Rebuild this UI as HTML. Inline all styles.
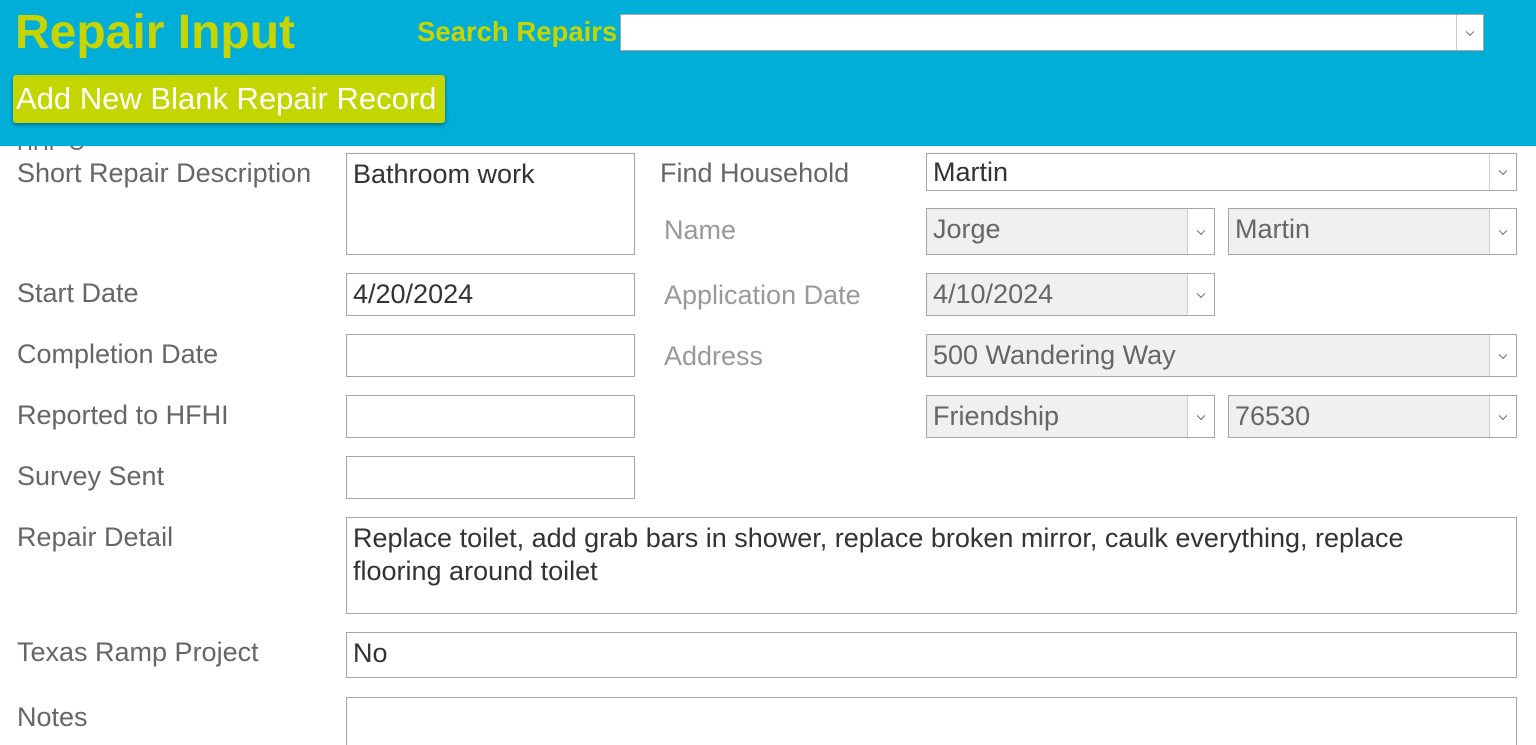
<!DOCTYPE html>
<html><head><meta charset="utf-8"><style>
*{box-sizing:border-box;margin:0;padding:0}
html,body{width:1536px;height:745px;overflow:hidden}
body{background:#fff;font-family:"Liberation Sans",Arial,sans-serif;position:relative}
.a{position:absolute}
.lbl{position:absolute;font-size:27px;color:#666;line-height:30px}
.lbl.g{color:#999}
.box{position:absolute;border:1px solid #a6a6a6;background:#fff;font-size:27px;color:#333;padding:4px 6px;line-height:33px;white-space:nowrap;overflow:hidden}
.box.d{background:#f0f0f0;color:#666}
.dd{position:absolute;right:0;top:0;bottom:0;width:27px;background:#fff;border-left:1px solid #ccc}
.dd:after{content:"";position:absolute;left:10px;top:50%;width:5px;height:5px;border-right:1px solid #666;border-bottom:1px solid #666;transform:translateY(-70%) rotate(45deg)}
</style></head><body>
<div class="lbl" style="left:17px;top:128px;font-size:22px;color:#666">HHF C</div>
<div class="a" style="left:0;top:0;width:1536px;height:146px;background:#00aed8"></div>
<div class="a" style="left:15px;top:4px;font-size:48px;font-weight:bold;color:#c8d400;line-height:58px">Repair Input</div>
<div class="a" style="left:417px;top:16px;font-size:27.5px;font-weight:bold;color:#c8d400;line-height:32px">Search Repairs</div>
<div class="box" style="left:620px;top:14px;width:864px;height:37px"><div class="dd"></div></div>
<div class="a" style="left:13px;top:75px;width:432px;height:48px;background:#c4d600;border-radius:3px;box-shadow:0 2px 4px rgba(0,0,0,.35);color:#fff;font-size:31px;line-height:48px;padding-left:3px;white-space:nowrap">Add New Blank Repair Record</div>

<div class="lbl" style="left:17px;top:158px">Short Repair Description</div>
<div class="box" style="left:346px;top:153px;width:289px;height:102px">Bathroom work</div>
<div class="lbl" style="left:17px;top:278px">Start Date</div>
<div class="box" style="left:346px;top:273px;width:289px;height:43px">4/20/2024</div>
<div class="lbl" style="left:17px;top:339px">Completion Date</div>
<div class="box" style="left:346px;top:334px;width:289px;height:43px"></div>
<div class="lbl" style="left:17px;top:400px">Reported to HFHI</div>
<div class="box" style="left:346px;top:395px;width:289px;height:43px"></div>
<div class="lbl" style="left:17px;top:461px">Survey Sent</div>
<div class="box" style="left:346px;top:456px;width:289px;height:43px"></div>
<div class="lbl" style="left:17px;top:522px">Repair Detail</div>
<div class="box" style="left:346px;top:517px;width:1171px;height:97px;white-space:normal">Replace toilet, add grab bars in shower, replace broken mirror, caulk everything, replace<br>flooring around toilet</div>
<div class="lbl" style="left:17px;top:637px">Texas Ramp Project</div>
<div class="box" style="left:346px;top:632px;width:1171px;height:46px">No</div>
<div class="lbl" style="left:17px;top:702px">Notes</div>
<div class="box" style="left:346px;top:697px;width:1171px;height:60px"></div>

<div class="lbl" style="left:660px;top:158px">Find Household</div>
<div class="box" style="left:926px;top:153px;width:591px;height:38px;padding-top:2px">Martin<div class="dd"></div></div>
<div class="lbl g" style="left:664px;top:215px">Name</div>
<div class="box d" style="left:926px;top:208px;width:289px;height:47px">Jorge<div class="dd"></div></div>
<div class="box d" style="left:1228px;top:208px;width:289px;height:47px">Martin<div class="dd"></div></div>
<div class="lbl g" style="left:664px;top:280px">Application Date</div>
<div class="box d" style="left:926px;top:273px;width:289px;height:43px">4/10/2024<div class="dd"></div></div>
<div class="lbl g" style="left:664px;top:341px">Address</div>
<div class="box d" style="left:926px;top:334px;width:591px;height:43px">500 Wandering Way<div class="dd"></div></div>
<div class="box d" style="left:926px;top:395px;width:289px;height:43px">Friendship<div class="dd"></div></div>
<div class="box d" style="left:1228px;top:395px;width:289px;height:43px">76530<div class="dd"></div></div>
</body></html>
